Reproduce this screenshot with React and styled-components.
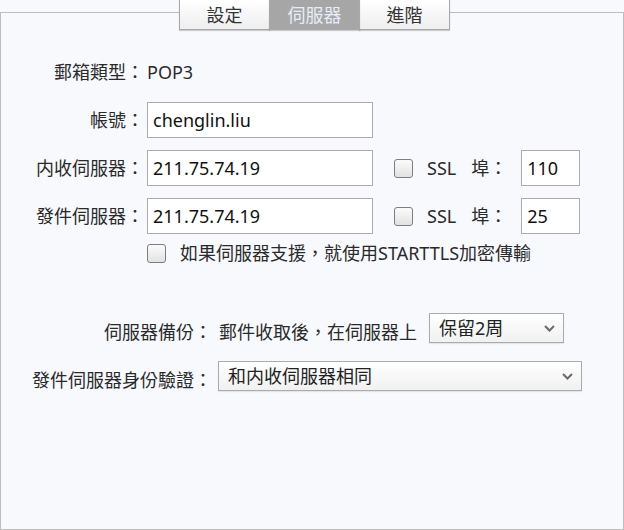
import React from "react";
import styled, { createGlobalStyle } from "styled-components";

const Global = createGlobalStyle`
  html, body { margin: 0; padding: 0; background: #f8f9fd; }
  body { font-family: "Noto Sans", "Noto Sans CJK TC", sans-serif; color: #2a2a2a; }
  * { box-sizing: border-box; }
`;

const Page = styled.div`
  width: 624px;
  height: 530px;
  padding-top: 12px;
  background: #f8f9fd;
`;

const Panel = styled.div`
  height: 518px;
  border: 1px solid #bdbdbd;
  display: flex;
  flex-direction: column;
`;

const TabBar = styled.div`
  display: flex;
  margin-top: -13px;
  padding-left: 178px;
`;

const Tab = styled.div`
  width: 91px;
  height: 30px;
  margin-left: -1px;
  &:first-child { margin-left: 0; }
  display: flex;
  align-items: center;
  justify-content: center;
  font-size: 18px;
  line-height: 1;
  border: 1px solid #a8a8a8;
  border-top: none;
  color: ${(p) => (p.$active ? "#e6edf8" : "#333")};
  background: ${(p) =>
    p.$active ? "#a6a6a6" : "linear-gradient(to bottom, #ffffff, #eeeeee)"};
  box-shadow: 0 1px 1px rgba(0, 0, 0, 0.18);
  position: relative;
  z-index: ${(p) => (p.$active ? 2 : 1)};
`;

const Form = styled.div`
  display: flex;
  flex-direction: column;
  padding-top: 24px;
`;

const Row = styled.div`
  display: flex;
  align-items: center;
  height: ${(p) => p.$h || 36}px;
  margin-top: ${(p) => p.$mt || 0}px;
  font-size: 18px;
  line-height: 24px;
`;

const Label = styled.div`
  width: ${(p) => p.$w}px;
  margin-right: ${(p) => p.$gap}px;
  text-align: right;
  white-space: nowrap;
  padding-top: ${(p) => p.$shift || 0}px;
  color: #2a2a2a;
`;

const Text = styled.span`
  white-space: nowrap;
  margin-right: ${(p) => p.$mr || 0}px;
  padding-top: ${(p) => p.$shift || 0}px;
  color: #2a2a2a;
`;

const Input = styled.input`
  width: ${(p) => p.$w}px;
  height: 36px;
  border: 1px solid #ababab;
  background: #fff;
  font: inherit;
  font-size: 18px;
  color: #111;
  padding: 0 5px;
  margin-right: ${(p) => p.$mr || 0}px;
  outline: none;
`;

const Check = styled.span`
  display: inline-block;
  width: 19px;
  height: 19px;
  border: 1px solid #7d7d7d;
  border-radius: 3px;
  background: linear-gradient(to bottom, #fbfbfb, #e2e2e2);
  margin-right: ${(p) => p.$mr || 0}px;
  flex-shrink: 0;
`;

const Select = styled.div`
  width: ${(p) => p.$w}px;
  height: 30px;
  border: 1px solid #ababab;
  background: linear-gradient(to bottom, #ffffff, #f1f1f1);
  display: flex;
  align-items: center;
  justify-content: space-between;
  padding: 0 9px 0 9px;
  padding-right: ${(p) => p.$pr}px;
  font-size: 18px;
  color: #222;
  box-shadow: 0 1px 1px rgba(0, 0, 0, 0.08);
`;

const Chevron = () => (
  <svg width="11" height="7" viewBox="0 0 11 7">
    <polyline points="1,1 5.5,5.5 10,1" fill="none" stroke="#6a6a6a" strokeWidth="2" />
  </svg>
);

export default function App() {
  return (
    <>
      <Global />
      <Page>
        <Panel>
          <TabBar>
            <Tab>設定</Tab>
            <Tab $active>伺服器</Tab>
            <Tab>進階</Tab>
          </TabBar>
          <Form>
            <Row>
              <Label $w={143} $gap={3}>郵箱類型：</Label>
              <Text>POP3</Text>
            </Row>
            <Row $mt={12}>
              <Label $w={143} $gap={3}>帳號：</Label>
              <Input $w={226} defaultValue="chenglin.liu" />
            </Row>
            <Row $mt={12}>
              <Label $w={143} $gap={3}>内收伺服器：</Label>
              <Input $w={226} $mr={21} defaultValue="211.75.74.19" />
              <Check $mr={14} />
              <Text $mr={15}>SSL</Text>
              <Text $mr={14}>埠：</Text>
              <Input $w={59} defaultValue="110" />
            </Row>
            <Row $mt={12}>
              <Label $w={143} $gap={3}>發件伺服器：</Label>
              <Input $w={226} $mr={21} defaultValue="211.75.74.19" />
              <Check $mr={14} />
              <Text $mr={15}>SSL</Text>
              <Text $mr={14}>埠：</Text>
              <Input $w={59} defaultValue="25" />
            </Row>
            <Row $h={20} $mt={9}>
              <Label $w={146} $gap={0} />
              <Check $mr={14} />
              <Text>如果伺服器支援，就使用STARTTLS加密傳輸</Text>
            </Row>
            <Row $h={30} $mt={50}>
              <Label $w={211} $gap={7} $shift={7}>伺服器備份：</Label>
              <Text $mr={12} $shift={7}>郵件收取後，在伺服器上</Text>
              <Select $w={135} $pr={8}>
                <span>保留2周</span>
                <Chevron />
              </Select>
            </Row>
            <Row $h={30} $mt={18}>
              <Label $w={211} $gap={6} $shift={7}>發件伺服器身份驗證：</Label>
              <Select $w={364} $pr={8}>
                <span>和内收伺服器相同</span>
                <Chevron />
              </Select>
            </Row>
          </Form>
        </Panel>
      </Page>
    </>
  );
}
